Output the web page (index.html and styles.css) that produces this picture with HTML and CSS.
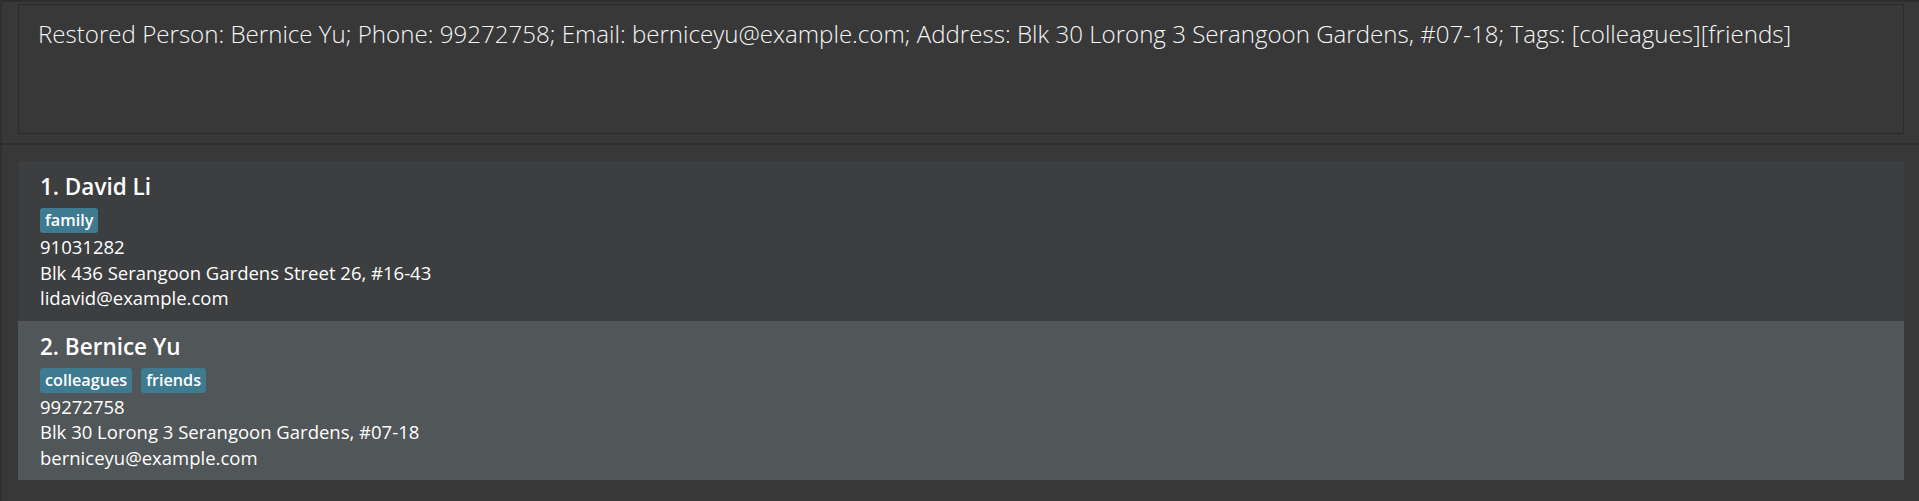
FILE: index.html
```html
<!DOCTYPE html>
<html>
<head>
<meta charset="utf-8">
<link rel="stylesheet" href="styles.css">
</head>
<body>
<div class="app">
  <section class="result-pane">
    <div class="result-box">Restored Person: Bernice Yu; Phone: 99272758; Email: berniceyu@example.com; Address: Blk 30 Lorong 3 Serangoon Gardens, #07-18; Tags: [colleagues][friends]</div>
  </section>
  <section class="list-pane">
    <div class="list">
      <div class="card card-even">
        <div class="name">1. David Li</div>
        <div class="tags"><span class="tag">family</span></div>
        <div class="field">91031282</div>
        <div class="field">Blk 436 Serangoon Gardens Street 26, #16-43</div>
        <div class="field">lidavid@example.com</div>
      </div>
      <div class="card card-odd">
        <div class="name">2. Bernice Yu</div>
        <div class="tags"><span class="tag">colleagues</span><span class="tag">friends</span></div>
        <div class="field">99272758</div>
        <div class="field">Blk 30 Lorong 3 Serangoon Gardens, #07-18</div>
        <div class="field">berniceyu@example.com</div>
      </div>
    </div>
  </section>
</div>
</body>
</html>
```

FILE: styles.css
```css
html, body {
  margin: 0;
  padding: 0;
  background: #383838;
}
body {
  width: 1919px;
  height: 501px;
  overflow: hidden;
  font-family: "Open Sans", "Noto Sans", sans-serif;
  color: #ffffff;
}
.app {
  display: flex;
  flex-direction: column;
  border-left: 2px solid #303030;
  height: 501px;
  box-sizing: border-box;
}
.result-pane {
  border-top: 2px solid #2e2e2e;
  border-bottom: 2px solid #2e2e2e;
  padding: 2px 15px 0 16px;
  height: 145px;
  box-sizing: border-box;
}
.result-box {
  height: 130px;
  box-sizing: border-box;
  border: 1px solid #2a2a2a;
  padding: 12px 19px;
  font-weight: 300;
  font-size: 24.1px;
  line-height: 33px;
  color: #f6f6f6;
  white-space: nowrap;
}
.list-pane {
  padding: 16px 15px 0 16px;
}
.list {
  display: flex;
  flex-direction: column;
}
.card {
  height: 159.5px;
  box-sizing: border-box;
  padding: 11px 22px 0 22px;
  display: flex;
  flex-direction: column;
}
.card-even { background: #3c3e3f; }
.card-odd { background: #515658; }
.name {
  font-size: 22.5px;
  font-weight: 600;
  line-height: 30px;
  color: #ffffff;
}
.tags {
  display: flex;
  gap: 9px;
  margin: 6px 0 1px;
}
.tag {
  background: #3e7b91;
  border-radius: 3px;
  font-size: 16.2px;
  font-weight: 600;
  line-height: 25px;
  padding: 0 5px;
  color: #ffffff;
}
.field {
  font-size: 18.5px;
  line-height: 25.7px;
  color: #ffffff;
}
```
